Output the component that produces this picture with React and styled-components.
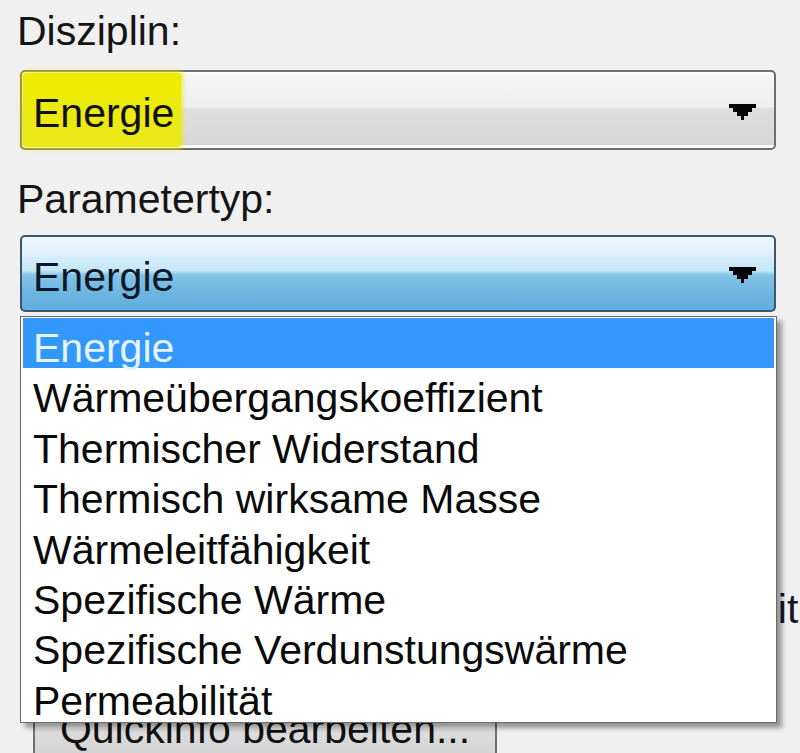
import React from 'react';
import styled, { createGlobalStyle, css } from 'styled-components';

const GlobalStyle = createGlobalStyle`
  html, body {
    margin: 0;
    padding: 0;
    height: 753px;
    overflow: hidden;
    background: #f0f0f0;
  }

  body {
    font-family: 'Liberation Sans', Arial, sans-serif;
    font-size: 41px;
    color: #111;
  }
`;

const StyledDialog = styled.div`
  width: 800px;
  box-sizing: border-box;
  padding: 7px 24px 0 20px;
`;

const Label = styled.div`
  line-height: 48px;
  margin-left: -3px;
  white-space: nowrap;
  color: #151515;
`;

const Field = styled.div`
  position: relative;
  margin-top: ${(p) => p.$gap}px;
`;

const comboIdle = css`
  border: 2px solid #6d6d6d;
  background: linear-gradient(
    to bottom,
    #ffffff 0px,
    #f4f4f4 3px,
    #efefef 46%,
    #dfdfdf 48%,
    #d6d6d6 96%,
    #ffffff 97%
  );
  color: #111;
`;

const comboOpen = css`
  border: 2px solid #3b576b;
  background: linear-gradient(
    to bottom,
    #eef7fe 0px,
    #e2f1fc 22%,
    #d3ecfa 30%,
    #c4e7f7 46%,
    #84c4e6 52%,
    #6db6e0 75%,
    #62afdd 100%
  );
  color: #0c1828;
`;

const Combo = styled.div`
  box-sizing: border-box;
  height: ${(p) => p.$height}px;
  border-radius: 5px;
  display: flex;
  align-items: center;
  justify-content: space-between;
  padding: 7px 18px 0 8px;
  ${(p) => (p.$open ? comboOpen : comboIdle)}
`;

const Value = styled.span`
  line-height: 46px;
  padding-left: 3px;
  ${(p) =>
    p.$marked &&
    css`
      align-self: stretch;
      display: flex;
      align-items: center;
      margin: -6px 0 1px -7px;
      padding: 6px 7px 0 10px;
      background: linear-gradient(to bottom, #efec00, #e9e81a);
      box-shadow: 0 0 4px 2px rgba(236, 234, 20, 0.75);
      border-radius: 3px;
    `}
`;

const Arrow = () => (
  <svg width="27" height="16" viewBox="0 0 27 16">
    <path
      d="M0 0H27V4H23V8H19V12H15V16H12V12H8V8H4V4H0Z"
      fill="#050505"
    />
  </svg>
);

const ArrowSlot = styled.span`
  display: flex;
  margin-top: -4px;
`;

const DropList = styled.ul`
  position: absolute;
  top: calc(100% + 4px);
  left: 0;
  right: -1px;
  z-index: 5;
  list-style: none;
  margin: 0;
  padding: 1px 2px;
  background: #ffffff;
  border: 1px solid #6a6a6a;
  box-shadow: 5px 5px 5px rgba(0, 0, 0, 0.38);
`;

const Option = styled.li`
  height: 50.4px;
  box-sizing: border-box;
  padding: 10px 0 0 10px;
  line-height: 40.4px;
  white-space: nowrap;
  color: ${(p) => (p.$selected ? '#e4f5ff' : '#0a0a0a')};
  background: ${(p) => (p.$selected ? '#3398fc' : 'transparent')};
`;

const InfoRow = styled.div`
  display: grid;
  grid-template-columns: 653px auto;
  margin-top: 273px;
  line-height: 48px;
  white-space: nowrap;
  color: #101828;
`;

const Button = styled.button`
  display: block;
  box-sizing: border-box;
  width: 464px;
  height: 80px;
  margin: 55px 0 0 13px;
  padding: 2px 0 0 0;
  border: 2px solid #707070;
  border-radius: 4px;
  font: inherit;
  line-height: 46px;
  text-align: center;
  color: #111;
  background: linear-gradient(to bottom, #f2f2f2 0%, #ebebeb 50%, #dddddd 52%, #cfcfcf 100%);
`;

const options = [
  'Energie',
  'Wärmeübergangskoeffizient',
  'Thermischer Widerstand',
  'Thermisch wirksame Masse',
  'Wärmeleitfähigkeit',
  'Spezifische Wärme',
  'Spezifische Verdunstungswärme',
  'Permeabilität',
];

const App = () => {
  const selected = 'Energie';

  return (
    <>
      <GlobalStyle />
      <StyledDialog>
        <Label>Disziplin:</Label>
        <Field $gap={15}>
          <Combo $height={80}>
            <Value $marked>Energie</Value>
            <ArrowSlot>
              <Arrow />
            </ArrowSlot>
          </Combo>
        </Field>

        <Field $gap={25}>
          <Label>Parametertyp:</Label>
        </Field>
        <Field $gap={12}>
          <Combo $height={77} $open>
            <Value>{selected}</Value>
            <ArrowSlot>
              <Arrow />
            </ArrowSlot>
          </Combo>
          <DropList>
            {options.map((opt) => (
              <Option key={opt} $selected={opt === selected}>
                {opt}
              </Option>
            ))}
          </DropList>
        </Field>

        <InfoRow>
          <span />
          <span>Einheit</span>
        </InfoRow>
        <Button type="button">Quickinfo bearbeiten...</Button>
      </StyledDialog>
    </>
  );
};

export default App;
